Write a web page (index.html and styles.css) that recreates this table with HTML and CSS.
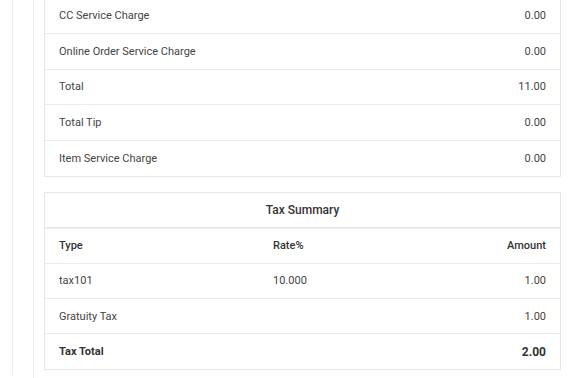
FILE: index.html
```html
<!DOCTYPE html>
<html lang="en">

<head>
    <meta charset="UTF-8">
    <title>Sales Summary</title>
    <link rel="stylesheet" href="styles.css">
</head>

<body>

    <div class="page">
        <div class="panel">
            <div class="report">

                <div class="card">
                    <div class="row">
                        <span>CC Service Charge</span>
                        <span class="num">0.00</span>
                    </div>
                    <div class="row">
                        <span>Online Order Service Charge</span>
                        <span class="num">0.00</span>
                    </div>
                    <div class="row">
                        <span>Total</span>
                        <span class="num">11.00</span>
                    </div>
                    <div class="row">
                        <span>Total Tip</span>
                        <span class="num">0.00</span>
                    </div>
                    <div class="row">
                        <span>Item Service Charge</span>
                        <span class="num">0.00</span>
                    </div>
                </div>

                <div class="card tax-card">
                    <div class="card-title">Tax Summary</div>
                    <div class="row tax-row head">
                        <span>Type</span>
                        <span>Rate%</span>
                        <span class="num">Amount</span>
                    </div>
                    <div class="row tax-row">
                        <span>tax101</span>
                        <span>10.000</span>
                        <span class="num">1.00</span>
                    </div>
                    <div class="row tax-row">
                        <span>Gratuity Tax</span>
                        <span></span>
                        <span class="num">1.00</span>
                    </div>
                    <div class="row tax-row total">
                        <span>Tax Total</span>
                        <span></span>
                        <span class="num">2.00</span>
                    </div>
                </div>

            </div>
        </div>
    </div>

</body>

</html>
```

FILE: styles.css
```css
html,
body {
    margin: 0;
    padding: 0;
    background: #fff;
    color: #444;
    font-family: Roboto, "Liberation Sans", sans-serif;
    font-size: 11px;
    height: 100%;
    overflow: hidden;
}

.page {
    padding-left: 12px;
    height: 100%;
}

.panel {
    border-left: 1px solid #ececec;
    padding-left: 20px;
    height: 100%;
}

.report {
    border-left: 1px solid #ececec;
    padding: 0 14px 0 10px;
    margin-top: -3px;
    height: calc(100% + 3px);
    display: flex;
    flex-direction: column;
    gap: 15px;
}

.card {
    border: 1px solid #e6e6e6;
    background: #fff;
}

.card-title {
    height: 34.2px;
    display: flex;
    align-items: center;
    justify-content: center;
    font-size: 12px;
    font-weight: 500;
    color: #333;
    border-bottom: 1px solid #e2e2e2;
    box-shadow: 0 1px 0 #f0f0f0;
}

.row {
    height: 34.8px;
    display: flex;
    align-items: center;
    justify-content: space-between;
    padding: 0 14px;
    border-bottom: 1px solid #ebebeb;
}

.row:last-child {
    border-bottom: none;
}

.tax-card .row {
    height: 34.4px;
}

.tax-row {
    display: grid;
    grid-template-columns: 214px 1fr 1fr;
}

.num {
    text-align: right;
}

.head {
    font-weight: 500;
    color: #333;
}

.total {
    font-weight: 700;
    color: #333;
}

.total .num {
    font-size: 12px;
}
```
